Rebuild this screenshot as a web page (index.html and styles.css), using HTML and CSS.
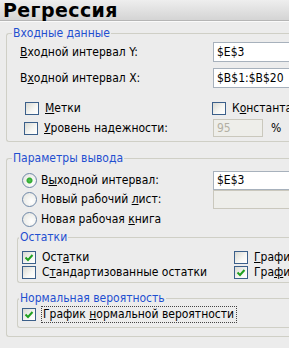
FILE: index.html
```html
<html>

<head>
   <title>Регрессия</title>
   <link rel="stylesheet" href="styles.css">
</head>

<body>
<div class="dialog">
   <div class="title">Регрессия</div>

   <div class="content">
      <fieldset class="group">
         <legend>Входные данные</legend>
         <div class="group-body body-input">
            <div class="row row-field row-y">
               <label class="caption"><u>В</u>ходной интервал Y:</label>
               <span class="edit">$E$3</span>
            </div>
            <div class="row row-field row-x">
               <label class="caption">В<u>х</u>одной интервал X:</label>
               <span class="edit">$B$1:$B$20</span>
            </div>
            <div class="row row-check row-labels">
               <span class="item"><i class="check"></i><span><u>М</u>етки</span></span>
               <span class="item"><i class="check"></i><span>К<u>о</u>нстанта - ноль</span></span>
            </div>
            <div class="row row-level">
               <span class="item"><i class="check"></i><span><u>У</u>ровень надежности:</span></span>
               <span class="edit edit-small disabled">95</span>
               <span class="percent">%</span>
            </div>
         </div>
      </fieldset>

      <fieldset class="group group-output">
         <legend>Параметры вывода</legend>
         <div class="group-body body-output">
            <div class="row row-radio row-out1">
               <span class="item"><i class="radio on"></i><span>В<u>ы</u>ходной интервал:</span></span>
               <span class="edit">$E$3</span>
            </div>
            <div class="row row-radio row-out2">
               <span class="item"><i class="radio"></i><span>Новый рабочий <u>л</u>ист:</span></span>
               <span class="edit disabled"></span>
            </div>
            <div class="row row-radio row-out3">
               <span class="item"><i class="radio"></i><span>Новая рабочая <u>к</u>нига</span></span>
            </div>

            <fieldset class="group group-inner group-resid">
               <legend>Остатки</legend>
               <div class="group-body body-resid">
                  <div class="row row-check">
                     <span class="item item-wide"><i class="check checked"></i><span>Ост<u>а</u>тки</span></span>
                     <span class="item"><i class="check"></i><span><u>Г</u>рафик остатков</span></span>
                  </div>
                  <div class="row row-check row-res2">
                     <span class="item item-wide"><i class="check"></i><span>С<u>т</u>андартизованные остатки</span></span>
                     <span class="item"><i class="check checked"></i><span>Гра<u>ф</u>ик подбора</span></span>
                  </div>
               </div>
            </fieldset>

            <fieldset class="group group-inner group-normal">
               <legend>Нормальная вероятность</legend>
               <div class="group-body body-normal">
                  <div class="row row-norm">
                     <span class="item"><i class="check checked"></i><span class="focus">График <u>н</u>ормальной вероятности</span></span>
                  </div>
               </div>
            </fieldset>
         </div>
      </fieldset>
   </div>
</div>
</body>

</html>
```

FILE: styles.css
```css
body {
   margin: 0;
   background: #ececec;
   overflow: hidden;
   font-family: "DejaVu Sans Condensed", "DejaVu Sans", sans-serif;
   font-stretch: condensed;
   font-size: 12px;
   color: #000;
}

.dialog {
   width: 360px;
   display: flex;
   flex-direction: column;
}

.title {
   height: 19px;
   padding: 1px 0 0 3px;
   font-family: "DejaVu Sans", sans-serif;
   font-stretch: normal;
   font-weight: bold;
   font-size: 19px;
   letter-spacing: 0.4px;
   line-height: 19px;
   background: linear-gradient(#eeeeee, #d4d4d4);
   border-bottom: 1px solid #b5b5b5;
   box-shadow: 0 1px 0 #fafafa;
}

.content {
   padding-left: 6px;
}

/* group boxes */

.group {
   margin: 5px 0 0;
   padding: 0;
   border: 1px solid #cfcfc6;
   border-right: none;
   border-radius: 3px 0 0 3px;
   min-width: 0;
}

.group legend {
   margin-left: 5px;
   padding: 0 1px;
   line-height: 14px;
   color: #1f4fd0;
}

.group-output {
   margin-top: 9px;
}

.group-inner {
   margin-left: -5px;
}

.group-inner legend {
   margin-left: 1px;
}

.group-resid {
   margin-top: 3px;
}

.group-normal {
   margin-top: 8px;
}

.body-input {
   padding: 2px 0 4px 13px;
}

.body-output {
   padding: 6px 0 8px 15px;
}

.body-resid {
   padding: 6px 0 3px 4px;
}

.body-normal {
   padding: 1px 0 5px 4px;
}

/* rows */

.row {
   display: flex;
   align-items: center;
}

.row-field {
   height: 20px;
}

.row-field .caption {
   width: 193px;
   flex: none;
}

.row-x {
   margin-top: 6px;
}

.row-check {
   height: 14px;
}

.row-labels {
   margin-top: 13px;
   padding-left: 5px;
}

.row-labels .item:first-child {
   width: 187px;
}

.row-level {
   height: 18px;
   margin-top: 4px;
   padding-left: 4px;
}

.row-level .item {
   width: 189px;
}

.percent {
   margin-left: 8px;
}

.row-radio {
   height: 18px;
}

.row-radio .item {
   width: 191px;
}

.row-out2 {
   margin-top: 1px;
}

.row-out3 {
   margin-top: 3px;
   height: 16px;
}

.row-res2 {
   margin-top: 1px;
}

.item {
   display: flex;
   align-items: center;
   white-space: nowrap;
   flex: none;
}

.item-wide {
   width: 212px;
}

.row-norm {
   height: 16px;
}

.focus {
   outline: 1px dotted #444;
   padding: 0 2px 0 1px;
   line-height: 15px;
}

/* controls */

.edit {
   flex: none;
   box-sizing: border-box;
   width: 110px;
   height: 20px;
   padding-left: 3px;
   line-height: 18px;
   background: #fff;
   border: 1px solid #a7b1bc;
   white-space: nowrap;
}

.row-radio .edit {
   height: 19px;
   line-height: 17px;
}

.edit-small {
   width: 50px;
   height: 18px;
   line-height: 16px;
}

.edit.disabled {
   background: #eeeeea;
   border-color: #cac8bd;
   color: #b3b0a4;
}

.check {
   flex: none;
   box-sizing: border-box;
   width: 14px;
   height: 13px;
   margin-right: 6px;
   border: 1px solid #3b5f8a;
   background: linear-gradient(135deg, #d9d9d2, #f7f7f4 60%, #ffffff);
}

.check.checked {
   background:
      url("data:image/svg+xml,%3Csvg xmlns='http://www.w3.org/2000/svg' viewBox='0 0 12 11'%3E%3Cpath d='M2.5 5.5 L5 8 L9.5 3' fill='none' stroke='%2321a121' stroke-width='2'/%3E%3C/svg%3E") center / 12px 11px no-repeat,
      linear-gradient(135deg, #d9d9d2, #f7f7f4 60%, #ffffff);
}

.radio {
   flex: none;
   box-sizing: border-box;
   width: 15px;
   height: 15px;
   margin-right: 4px;
   border: 1px solid #6f88a8;
   border-radius: 50%;
   background: radial-gradient(circle at 65% 65%, #ffffff, #e2e2dc);
}

.radio.on {
   background:
      radial-gradient(circle, #56c856 0, #2ea82e 2.5px, transparent 3.5px),
      radial-gradient(circle at 65% 65%, #ffffff, #e2e2dc);
}
```
